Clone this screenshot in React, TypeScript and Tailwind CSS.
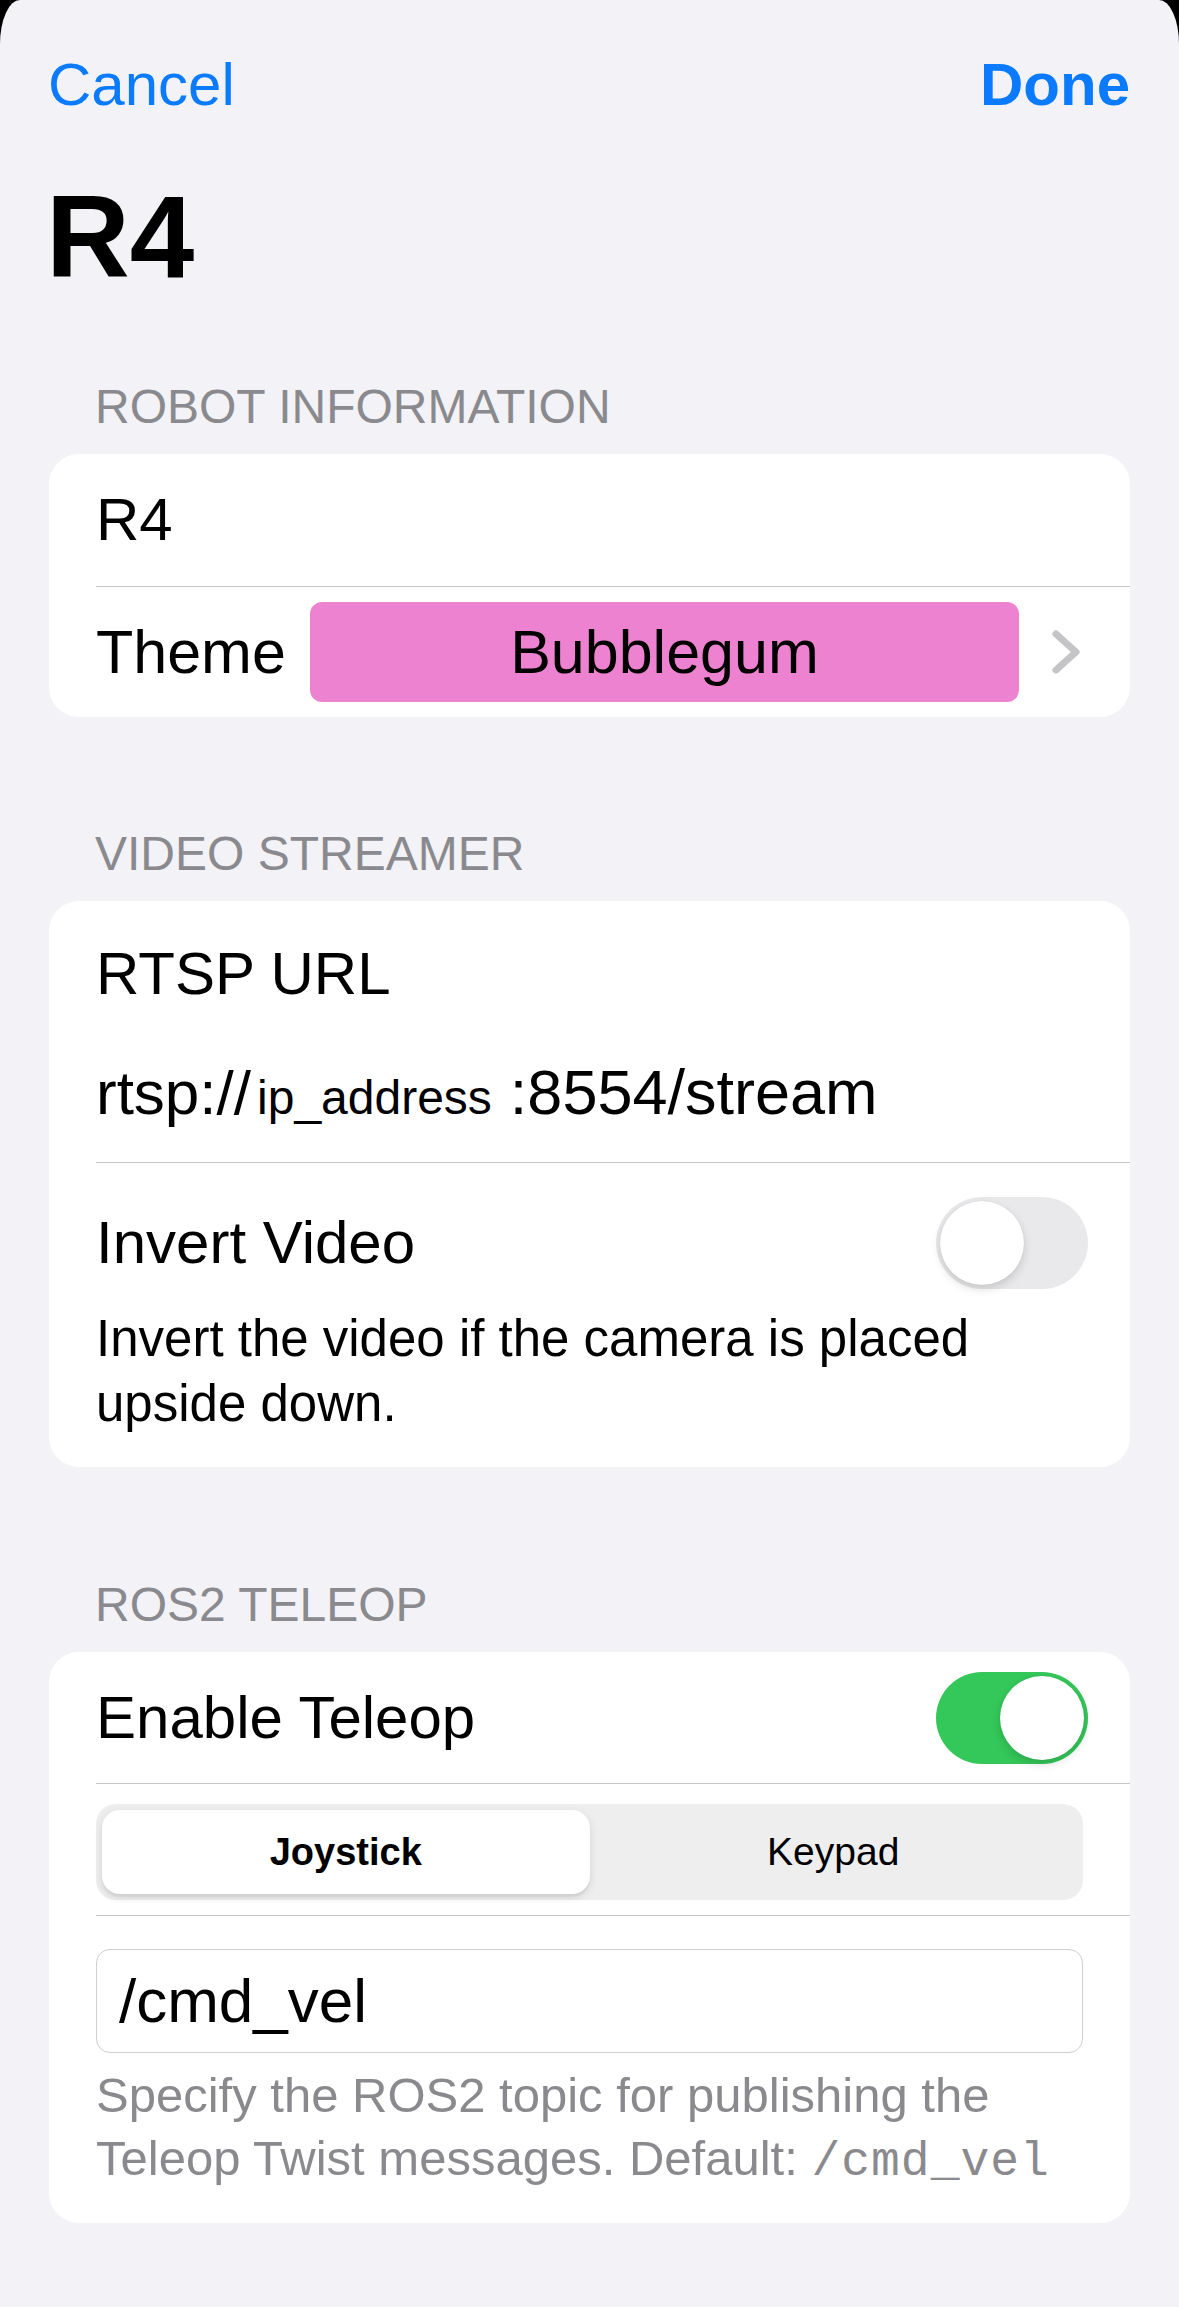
import React, { useState } from "react";

const sans = { fontFamily: '"Liberation Sans", Arial, sans-serif' };

function Toggle({ on, onClick }: { on: boolean; onClick: () => void }) {
  return (
    <button
      onClick={onClick}
      className={`relative flex h-[92px] w-[152px] shrink-0 items-center rounded-full px-[4px] ${
        on ? "justify-end bg-[#34c759]" : "justify-start bg-[#e9e9eb]"
      }`}
    >
      <span className="block h-[84px] w-[84px] rounded-full bg-white shadow-[0_4px_10px_rgba(0,0,0,0.15),0_0_1px_rgba(0,0,0,0.12)]" />
    </button>
  );
}

function Divider() {
  return <div className="h-px bg-[#c6c6c8]" />;
}

function SectionHeader({ title }: { title: string }) {
  return (
    <div className="pl-[95px] text-[48px] leading-[56px] text-[#8a8a8e]">
      {title}
    </div>
  );
}

export default function App() {
  const [invert, setInvert] = useState(false);
  const [teleop, setTeleop] = useState(true);
  const [mode, setMode] = useState<"joystick" | "keypad">("joystick");

  return (
    <div className="flex min-h-screen flex-col bg-black" style={sans}>
      <div className="flex-1 rounded-tl-[20px_44px] rounded-tr-[20px_44px] bg-[#f2f2f7] text-black">
        {/* nav bar */}
        <div className="flex items-center justify-between pl-[48px] pr-[49px] pt-[49px] text-[60px] leading-[72px] text-[#0a7aff]">
          <button>Cancel</button>
          <button className="font-bold">Done</button>
        </div>

        {/* large title */}
        <h1 className="mt-[58px] pl-[46px] text-[116px] font-bold leading-[116px]">R4</h1>

        {/* robot information */}
        <div className="mt-[84px]">
          <SectionHeader title="ROBOT INFORMATION" />
        </div>
        <div className="mx-[49px] mt-[19px] rounded-[30px] bg-white pl-[47px] text-[60px] leading-[72px]">
          <div className="flex h-[132px] items-center">R4</div>
          <Divider />
          <div className="flex h-[130px] items-center pr-[50px]">
            <span className="text-[61px]">Theme</span>
            <div className="ml-[24px] flex h-[100px] flex-1 items-center justify-center rounded-[12px] bg-[#ed82d0] text-[61px]">
              Bubblegum
            </div>
            <svg
              className="ml-[33px]"
              width="28"
              height="44"
              viewBox="0 0 28 44"
              fill="none"
              stroke="#c4c4c6"
              strokeWidth="7"
              strokeLinecap="round"
              strokeLinejoin="round"
            >
              <polyline points="4,4 24,22 4,40" />
            </svg>
          </div>
        </div>

        {/* video streamer */}
        <div className="mt-[109px]">
          <SectionHeader title="VIDEO STREAMER" />
        </div>
        <div className="mx-[49px] mt-[19px] rounded-[30px] bg-white pl-[47px] text-[60px] leading-[72px]">
          <div className="flex flex-col gap-[46px] pb-[34px] pr-[42px] pt-[37px]">
            <div className="h-[72px]">RTSP URL</div>
            <div className="flex h-[72px] items-baseline overflow-visible">
              <span className="text-[62px]">rtsp://</span>
              <span className="ml-[6px] text-[48px]">ip_address</span>
              <span className="ml-[18px] text-[63px]">:8554/stream</span>
            </div>
          </div>
          <Divider />
          <div className="pb-[31px] pr-[42px] pt-[34px]">
            <div className="flex items-center justify-between">
              <span>Invert Video</span>
              <Toggle on={invert} onClick={() => setInvert(!invert)} />
            </div>
            <p className="mt-[17px] text-[51px] leading-[65px]">
              Invert the video if the camera is placed upside down.
            </p>
          </div>
        </div>

        {/* ros2 teleop */}
        <div className="mt-[110px]">
          <SectionHeader title="ROS2 TELEOP" />
        </div>
        <div className="mx-[49px] mt-[19px] rounded-[30px] bg-white pl-[47px] text-[60px] leading-[72px]">
          <div className="flex items-center justify-between pb-[19px] pr-[42px] pt-[20px]">
            <span>Enable Teleop</span>
            <Toggle on={teleop} onClick={() => setTeleop(!teleop)} />
          </div>
          <Divider />
          <div className="pb-[15px] pr-[47px] pt-[20px]">
            <div className="grid h-[96px] grid-cols-2 rounded-[20px] bg-[#eeeeef] p-[6px] text-[38px]">
              <button
                onClick={() => setMode("joystick")}
                className={`flex items-center justify-center rounded-[18px] ${
                  mode === "joystick"
                    ? "bg-white font-semibold shadow-[0_3px_8px_rgba(0,0,0,0.12),0_3px_1px_rgba(0,0,0,0.04)]"
                    : ""
                }`}
              >
                Joystick
              </button>
              <button
                onClick={() => setMode("keypad")}
                className={`flex items-center justify-center rounded-[18px] text-[39px] ${
                  mode === "keypad"
                    ? "bg-white font-semibold shadow-[0_3px_8px_rgba(0,0,0,0.12),0_3px_1px_rgba(0,0,0,0.04)]"
                    : ""
                }`}
              >
                Keypad
              </button>
            </div>
          </div>
          <Divider />
          <div className="pb-[29px] pr-[47px] pt-[33px]">
            <div className="flex h-[104px] items-center rounded-[14px] border border-[#cfcfd3] pl-[22px] text-[62px]">
              /cmd_vel
            </div>
            <p className="mt-[11px] text-[49px] leading-[63px] text-[#8a8a8e]">
              Specify the ROS2 topic for publishing the Teleop Twist messages. Default:{" "}
              <span
                className="text-[48px] leading-[63px] tracking-[1px]"
                style={{ fontFamily: '"Liberation Mono", "Courier New", monospace' }}
              >
                /cmd_vel
              </span>
            </p>
          </div>
        </div>
      </div>
    </div>
  );
}
